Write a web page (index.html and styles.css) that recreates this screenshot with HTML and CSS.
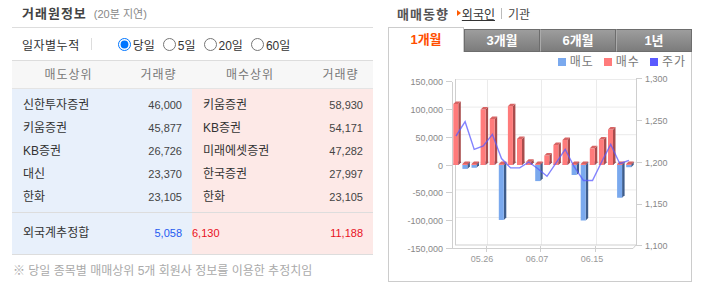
FILE: index.html
```html
<!DOCTYPE html>
<html lang="ko">
  <head>
    <meta charset="UTF-8" />
    <meta name="viewport" content="width=device-width, initial-scale=1.0" />
    <title>거래원정보</title>

    <link rel="stylesheet" href="styles.css">
  </head>
  <body>
    <div class="wrap">
      <section class="trader">
        <h2 class="sec-title">거래원정보<span class="delay">(20분 지연)</span></h2>

        <div class="filter">
          <span class="filter-label">일자별누적</span>
          <span class="bar"></span>
          <label><input type="radio" name="period" checked />당일</label>
          <label><input type="radio" name="period" />5일</label>
          <label><input type="radio" name="period" />20일</label>
          <label><input type="radio" name="period" />60일</label>
        </div>

        <div class="trade-head">
          <span>매도상위</span><span>거래량</span><span>매수상위</span><span>거래량</span>
        </div>

        <div class="trade-body">
          <div class="trade-row"><span class="name">신한투자증권</span><span class="num">46,000</span><span class="name">키움증권</span><span class="num">58,930</span></div>
          <div class="trade-row"><span class="name">키움증권</span><span class="num">45,877</span><span class="name">KB증권</span><span class="num">54,171</span></div>
          <div class="trade-row"><span class="name">KB증권</span><span class="num">26,726</span><span class="name">미래에셋증권</span><span class="num">47,282</span></div>
          <div class="trade-row"><span class="name">대신</span><span class="num">23,370</span><span class="name">한국증권</span><span class="num">27,997</span></div>
          <div class="trade-row"><span class="name">한화</span><span class="num">23,105</span><span class="name">한화</span><span class="num">23,105</span></div>
        </div>

        <div class="trade-total">
          <span class="name">외국계추정합</span><span class="num sell">5,058</span><span class="num buy first">6,130</span><span class="num buy">11,188</span>
        </div>

        <p class="note">※ 당일 종목별 매매상위 5개 회원사 정보를 이용한 추정치임</p>
      </section>

      <section class="trend">
        <div class="trend-title">
          <h2>매매동향</h2>
          <a class="kind on">외국인</a>
          <span class="sep"></span>
          <a class="kind">기관</a>
        </div>

        <ul class="tabs">
          <li class="tab on">1개월</li>
          <li class="tab">3개월</li>
          <li class="tab">6개월</li>
          <li class="tab">1년</li>
        </ul>

        <div class="chart-box">
          <div class="legend">
            <span class="key"><i class="sell"></i>매도</span>
            <span class="key"><i class="buy"></i>매수</span>
            <span class="key"><i class="price"></i>주가</span>
          </div>

          <svg class="chart" width="302" height="200" viewBox="0 0 302 200">
            <g transform="translate(-389 -71)">
              <g class="grid">
                <line x1="455" y1="80.5" x2="636" y2="80.5" />
                <line x1="455" y1="108.1" x2="636" y2="108.1" />
                <line x1="455" y1="135.7" x2="636" y2="135.7" />
                <line x1="455" y1="163.3" x2="636" y2="163.3" />
                <line x1="455" y1="190.9" x2="636" y2="190.9" />
                <line x1="455" y1="218.5" x2="636" y2="218.5" />
                <line x1="487.5" y1="80" x2="487.5" y2="246" />
                <line x1="541.5" y1="80" x2="541.5" y2="246" />
                <line x1="596.5" y1="80" x2="596.5" y2="246" />
              </g>
              <g class="frame">
                <line x1="455.5" y1="80" x2="455.5" y2="246" />
                <line x1="452.5" y1="83" x2="452.5" y2="249" />
                <line x1="636.5" y1="80" x2="636.5" y2="246" />
                <polyline points="455,246 636,246 633,249.5 452,249.5" />
                <line x1="446" y1="82.5" x2="452" y2="82.5" />
                <line x1="446" y1="110.5" x2="452" y2="110.5" />
                <line x1="446" y1="138.5" x2="452" y2="138.5" />
                <line x1="446" y1="166.5" x2="452" y2="166.5" />
                <line x1="446" y1="193.5" x2="452" y2="193.5" />
                <line x1="446" y1="221.5" x2="452" y2="221.5" />
                <line x1="446" y1="249.5" x2="452" y2="249.5" />
                <line x1="636" y1="79.5" x2="642" y2="79.5" />
                <line x1="636" y1="121.5" x2="642" y2="121.5" />
                <line x1="636" y1="163.5" x2="642" y2="163.5" />
                <line x1="636" y1="205.5" x2="642" y2="205.5" />
                <line x1="636" y1="246.5" x2="642" y2="246.5" />
                <line x1="486.5" y1="247" x2="486.5" y2="253" />
                <line x1="540.5" y1="247" x2="540.5" y2="253" />
                <line x1="595.5" y1="247" x2="595.5" y2="253" />
              </g>
              <g class="axis-left">
                <text x="443" y="86">150,000</text>
                <text x="443" y="114">100,000</text>
                <text x="443" y="141.5">50,000</text>
                <text x="443" y="169.5">0</text>
                <text x="443" y="196.5">-50,000</text>
                <text x="443" y="224.5">-100,000</text>
                <text x="443" y="252.5">-150,000</text>
              </g>
              <g class="axis-right">
                <text x="645" y="82.5">1,300</text>
                <text x="645" y="124.5">1,250</text>
                <text x="645" y="166.5">1,200</text>
                <text x="645" y="208">1,150</text>
                <text x="645" y="250">1,100</text>
              </g>
              <g class="axis-bottom">
                <text x="482" y="262.5">05.26</text>
                <text x="537" y="262.5">06.07</text>
                <text x="592" y="262.5">06.15</text>
              </g>
              <g id="bars"></g>
              <polyline id="price-line" class="price-line" points="" />
            </g>
          </svg>
        </div>
      </section>
    </div>

    <script>
      // 외국인 순매매 (천주) / 주가
      const flows = [110, -7, -5, 100, 83, -99, 106, 47, 6, -29, 17, 36, 45, -18, -100, 30, 46, 64, -59, -4];
      const prices = [1231, 1248, 1215, 1219, 1233, 1204, 1193, 1193, 1200, 1192, 1183, 1199, 1215, 1194, 1178, 1178, 1200, 1221, 1198, 1202];

      const zeroY = 166;
      const perK = 0.555;
      const startX = 453.3;
      const step = 9.1;
      const w = 5;
      const d = 2.5;

      const colors = {
        buy: { front: '#ff7b7b', side: '#a94c4c', top: '#d86464' },
        sell: { front: '#7aa9ee', side: '#3e5d8c', top: '#5b80bd' },
      };

      const box = (x, top, bottom, c) => `
        <polygon points="${x + w},${top} ${x + w + d},${top - d} ${x + w + d},${bottom - d} ${x + w},${bottom}" fill="${c.side}" />
        <rect x="${x}" y="${top}" width="${w}" height="${bottom - top}" fill="${c.front}" />
        <polygon points="${x},${top} ${x + d},${top - d} ${x + w + d},${top - d} ${x + w},${top}" fill="${c.top}" />`;

      const bars = flows
        .map((v, i) => {
          const x = startX + i * step;
          const h = Math.abs(v) * perK;
          if (v >= 0) return box(x, zeroY - 1, zeroY, colors.sell) + box(x, zeroY - h, zeroY, colors.buy);
          return box(x, zeroY, zeroY + h, colors.sell) + box(x, zeroY - 1, zeroY, colors.buy);
        })
        .join('');
      document.getElementById('bars').innerHTML = bars;

      const points = prices.map((p, i) => `${(startX + 2.7 + i * step).toFixed(1)},${(247 - (p - 1100) * 0.84).toFixed(1)}`).join(' ');
      document.getElementById('price-line').setAttribute('points', points);
    </script>
  </body>
</html>
```

FILE: styles.css
```css
body {
  margin: 0;
  font-family: "Liberation Sans", "Noto Sans CJK KR", sans-serif;
  font-size: 12px;
  color: #333;
}

.wrap {
  display: flex;
  align-items: flex-start;
  gap: 15px;
  padding-left: 12px;
}

/* 거래원정보 */
.trader {
  width: 361px;
}

.sec-title {
  margin: 0;
  height: 27px;
  line-height: 27px;
  padding-left: 10px;
  border-bottom: 1px solid #ddd;
  font-size: 13px;
  font-weight: bold;
  color: #444;
  letter-spacing: 1px;
}

.delay {
  margin-left: 7px;
  font-size: 11px;
  font-weight: normal;
  color: #888;
  letter-spacing: 0;
}

.filter {
  display: flex;
  align-items: center;
  height: 32px;
  padding-left: 10px;
  border-bottom: 1px solid #ddd;
}

.filter-label {
  letter-spacing: 0.5px;
}

.filter .bar {
  width: 1px;
  height: 12px;
  background: #ddd;
  margin: 0 26px 0 11px;
}

.filter label {
  display: flex;
  align-items: center;
  margin-right: 8px;
}

.filter input {
  width: 13px;
  height: 13px;
  margin: 0 2px 0 0;
}

.trade-head,
.trade-row,
.trade-total {
  display: grid;
  grid-template-columns: 113px 67px 116px 65px;
}

.trade-head {
  height: 27px;
  line-height: 29px;
  background: #f7f7f7;
  border-bottom: 1px solid #e4e4e4;
  color: #777;
  text-align: center;
  letter-spacing: 1px;
}

.trade-body,
.trade-total {
  background: linear-gradient(to right, #e8f0fb 180px, #fde9e7 180px);
}

.trade-body {
  padding: 5px 0 3px;
  border-bottom: 1px solid #ddd;
}

.trade-row {
  height: 23px;
  line-height: 23px;
}

.trade-total {
  height: 41px;
  line-height: 41px;
  border-bottom: 1px solid #ddd;
}

.name {
  padding-left: 11px;
}

.num {
  padding-right: 10px;
  text-align: right;
  font-size: 11px;
  color: #444;
}

.num.sell {
  color: #1f5bf0;
}

.num.buy {
  color: #e8101e;
}

.num.first {
  text-align: left;
  padding: 0;
}

.note {
  margin: 0;
  padding: 8px 0 0 1px;
  line-height: 16px;
  font-size: 12px;
  color: #aaa;
}

/* 매매동향 */
.trend {
  width: 304px;
}

.trend-title {
  display: flex;
  align-items: center;
  height: 27px;
  padding-left: 9px;
}

.trend-title h2 {
  margin: 0 13px 0 0;
  font-size: 13px;
  color: #555;
  letter-spacing: 1px;
}

.kind {
  color: #444;
}

.kind.on {
  position: relative;
  text-decoration: underline;
  color: #333;
}

.kind.on::before {
  content: "";
  position: absolute;
  left: -5px;
  top: 5px;
  border-left: 4px solid #ff5a00;
  border-top: 3px solid transparent;
  border-bottom: 3px solid transparent;
}

.trend-title .sep {
  width: 1px;
  height: 11px;
  background: #bbb;
  margin: 0 6px;
}

.tabs {
  display: flex;
  align-items: flex-end;
  height: 25px;
  margin: 0;
  padding: 0;
  list-style: none;
}

.tab {
  flex: 1;
  height: 21px;
  line-height: 21px;
  text-align: center;
  font-size: 13px;
  font-weight: bold;
  color: #fff;
  background: linear-gradient(#9d9d9d, #7c7c7c);
  border: 1px solid #6d6d6d;
  border-left-color: #aaa;
}

.tab.on {
  height: 24px;
  line-height: 24px;
  color: #ff4e00;
  background: #fff;
  border: 1px solid #ccc;
  border-bottom: none;
}

.tab.on + .tab {
  border-left-color: #6d6d6d;
}

.chart-box {
  height: 229px;
  border: 1px solid #ccc;
  border-top: none;
}

.legend {
  display: flex;
  justify-content: flex-end;
  box-sizing: border-box;
  height: 18px;
  padding: 2px 5px 0 0;
  line-height: 16px;
  color: #777;
  letter-spacing: 1px;
}

.key {
  display: flex;
  align-items: center;
  margin-left: 10px;
}

.key i {
  width: 8px;
  height: 8px;
  margin-right: 4px;
}

.key .sell {
  background: #7aa9ee;
}

.key .buy {
  background: #ff7b7b;
}

.key .price {
  background: #5a5aff;
}

.chart {
  display: block;
}

.chart .grid line {
  stroke: #ebebeb;
}

.chart .frame line,
.chart .frame polyline {
  stroke: #cfcfcf;
  fill: none;
}

.chart text {
  font-family: "Liberation Sans", sans-serif;
  font-size: 9px;
  fill: #888;
}

.axis-left text {
  text-anchor: end;
}

.axis-bottom text {
  text-anchor: middle;
  fill: #999;
}

.price-line {
  fill: none;
  stroke: #5a5aff;
  stroke-opacity: 0.75;
  stroke-width: 1.4;
}
```
